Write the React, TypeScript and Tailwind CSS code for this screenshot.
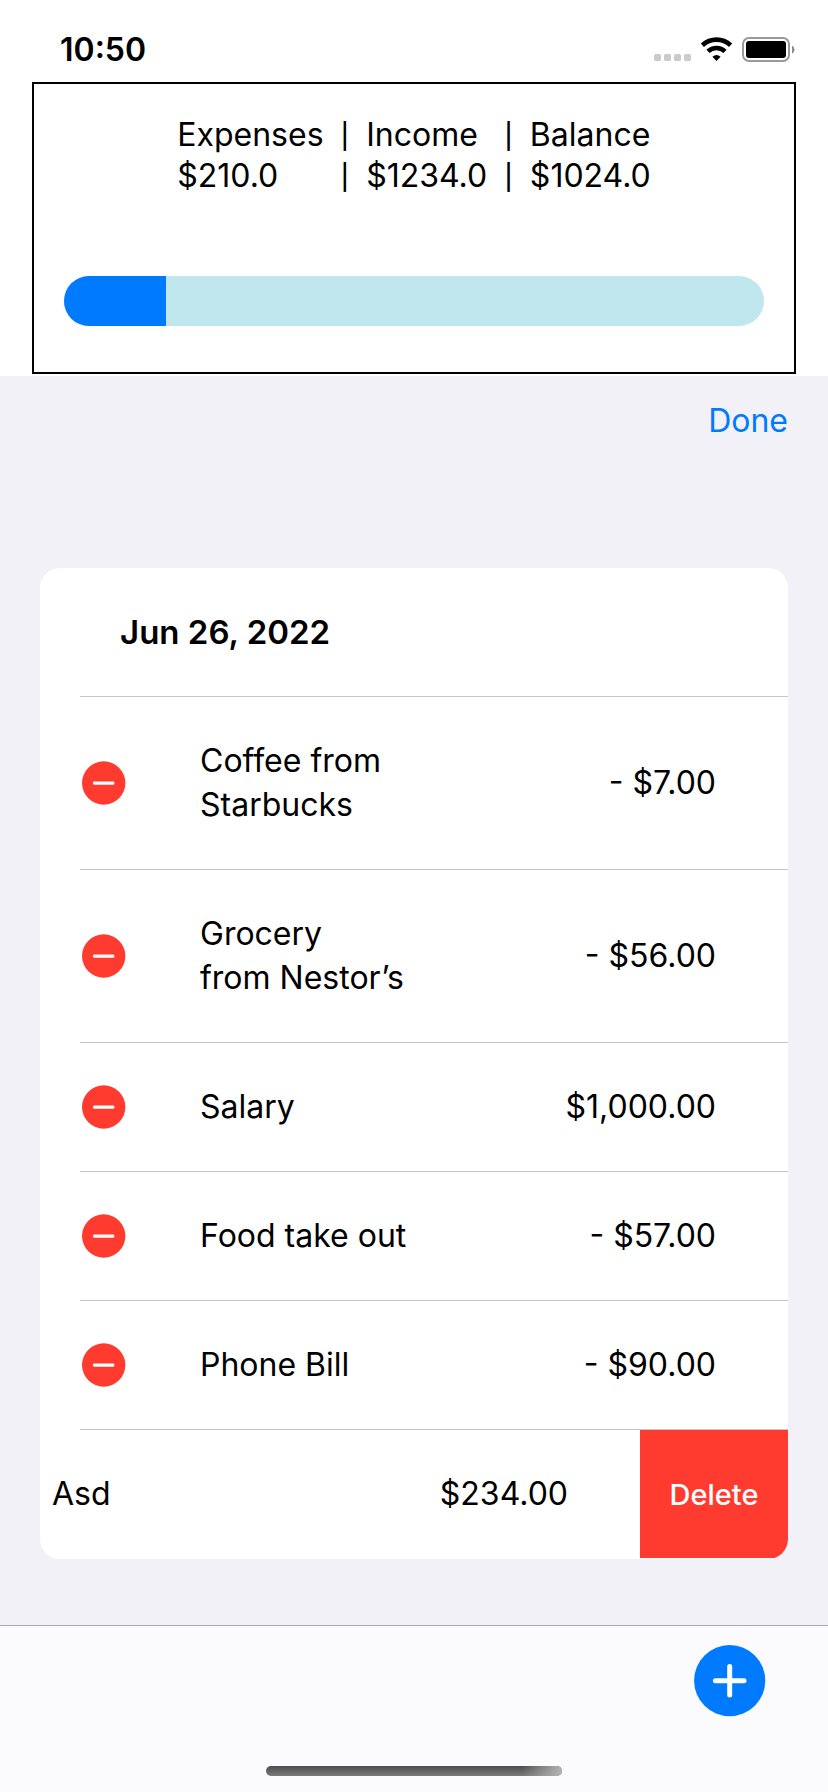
import React from "react";

type Entry = { name: string; amount: string };

const summary = [
  { label: "Expenses", value: "$210.0" },
  { label: "Income", value: "$1234.0" },
  { label: "Balance", value: "$1024.0" },
];

const entries: Entry[] = [
  { name: "Coffee from Starbucks", amount: "- $7.00" },
  { name: "Grocery from\u00a0Nestor’s", amount: "- $56.00" },
  { name: "Salary", amount: "$1,000.00" },
  { name: "Food take out", amount: "- $57.00" },
  { name: "Phone Bill", amount: "- $90.00" },
];

function StatusIcons() {
  return (
    <svg width="142" height="28" viewBox="0 0 142 28" aria-hidden="true">
      <g fill="#cbcbcb">
        <rect x="0" y="18" width="7" height="7" rx="1.6" />
        <rect x="10" y="18" width="7" height="7" rx="1.6" />
        <rect x="20" y="18" width="7" height="7" rx="1.6" />
        <rect x="30" y="18" width="7" height="7" rx="1.6" />
      </g>
      <g fill="none" stroke="#000" strokeWidth="4.6">
        <path d="M48.4 9.2 A20.6 20.6 0 0 1 76.6 9.2" />
        <path d="M54 15.4 A12.4 12.4 0 0 1 71 15.4" />
      </g>
      <path d="M62.5 25 L58.4 20.8 A6.4 6.4 0 0 1 66.6 20.8 Z" fill="#000" />
      <rect x="89" y="2" width="46" height="23" rx="6" fill="none" stroke="#999" strokeWidth="2" />
      <rect x="92" y="5" width="40" height="17" rx="3" fill="#000" />
      <path d="M138 9.5 A4.6 4.6 0 0 1 138 17.7 Z" fill="#8c8c8c" />
    </svg>
  );
}

function StatusBar() {
  return (
    <div className="flex h-[82px] items-center justify-between pt-[18px] pr-8 pl-[60px]">
      <time className="text-[32px] leading-9 font-semibold">10:50</time>
      <StatusIcons />
    </div>
  );
}

function Summary() {
  return (
    <section className="mx-8 mb-0.5 border-2 border-black px-[30px] pt-[30px] pb-[46px]">
      <div className="flex justify-center gap-[17px]">
        {summary.map((item, i) => (
          <React.Fragment key={item.label}>
            {i > 0 && (
              <div aria-hidden="true" className="pt-0.5 text-[25px] font-medium">
                <p>|</p>
                <p>|</p>
              </div>
            )}
            <div>
              <p>{item.label}</p>
              <p>{item.value}</p>
            </div>
          </React.Fragment>
        ))}
      </div>
      <div
        role="progressbar"
        aria-label="Expenses"
        aria-valuemin={0}
        aria-valuemax={1444}
        aria-valuenow={210}
        className="mt-[78px] h-[50px] overflow-hidden rounded-full bg-[#c0e7ed]"
      >
        <div className="h-full bg-[#007aff]" style={{ width: `${(210 / 1444) * 100}%` }} />
      </div>
    </section>
  );
}

function EntryRow({ name, amount }: Entry) {
  return (
    <li className="pl-10">
      <div className="flex items-center border-b border-[#c6c6c8] py-[42px] pr-[72px]">
        <button type="button" aria-label={`Remove ${name}`} className="ml-0.5 shrink-0">
          <svg width="44" height="44" viewBox="0 0 44 44" aria-hidden="true" className="-my-1">
            <circle cx="21.7" cy="22" r="21.7" fill="#ff3b30" />
            <rect x="11" y="20.4" width="21.4" height="3.4" rx="1.4" fill="#fff" />
          </svg>
        </button>
        <p className="ml-[74px] w-[220px] leading-[44px]">{name}</p>
        <p className="ml-auto leading-[44px]">{amount}</p>
      </div>
    </li>
  );
}

export default function App() {
  return (
    <div className="flex min-h-screen flex-col bg-white font-['Inter',sans-serif] text-[32px] leading-[41px] text-black">
      <header>
        <StatusBar />
        <Summary />
      </header>

      <main className="flex-1 bg-[#f2f1f7] px-10 pt-6 pb-16">
        <div className="flex justify-end">
          <button type="button" className="text-[#007aff]">
            Done
          </button>
        </div>

        <section className="mt-[127px] overflow-hidden rounded-[20px] bg-white">
          <div className="pl-10">
            <h2 className="border-b border-[#c6c6c8] py-[42px] pl-10 text-[33px] leading-[44px] font-semibold">
              Jun 26, 2022
            </h2>
          </div>
          <ul>
            {entries.map((entry) => (
              <EntryRow key={entry.name} {...entry} />
            ))}
            <li className="flex items-stretch pb-px">
              <p className="py-[42px] pl-3 leading-[44px]">Asd</p>
              <p className="ml-auto py-[42px] pr-[72px] leading-[44px]">$234.00</p>
              <button type="button" className="w-[148px] bg-[#ff3b30] text-[29px] font-medium text-white">
                Delete
              </button>
            </li>
          </ul>
        </section>
      </main>

      <footer className="flex flex-col border-t border-[#a9a9ad] bg-[#fbfbfd] pt-[19px] pb-4">
        <button type="button" aria-label="Add entry" className="mr-[62px] self-end">
          <svg width="72" height="72" viewBox="0 0 72 72" aria-hidden="true">
            <circle cx="35.7" cy="35.7" r="35.6" fill="#007aff" />
            <path d="M35.7 21.5 V50 M21.4 35.7 H50" stroke="#fff" strokeWidth="5" strokeLinecap="round" />
          </svg>
        </button>
        <div className="mt-[49px] flex h-2.5 w-[296px] justify-end self-center overflow-hidden rounded-full bg-linear-to-b from-[#4d4d4d] to-[#7a7a7a]">
          <div className="w-10 bg-linear-to-r from-transparent to-[#b4b4b4]" />
        </div>
      </footer>
    </div>
  );
}
